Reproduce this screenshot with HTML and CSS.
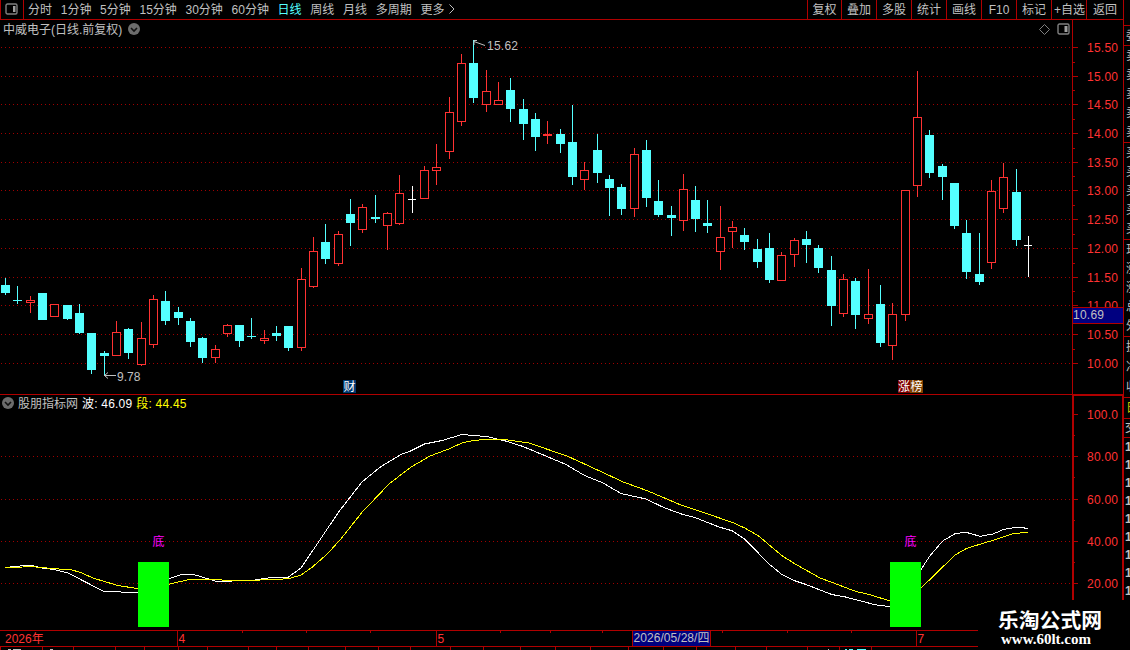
FILE: index.html
```html
<!DOCTYPE html>
<html lang="zh-CN">
<head>
    <meta charset="UTF-8">
    <title>中威电子 日线</title>
    <link rel="stylesheet" href="styles.css">
</head>
<body>
    <header class="toolbar">
        <div class="layout-btn">
            <svg width="13" height="12" viewBox="0 0 13 12"><rect x="1" y="1" width="11" height="10" rx="1.5"/><rect class="fill" x="8" y="3" width="2.5" height="6"/></svg>
        </div>
        <nav class="periods">
            <span>分时</span><span>1分钟</span><span>5分钟</span><span>15分钟</span><span>30分钟</span><span>60分钟</span><span class="active">日线</span><span>周线</span><span>月线</span><span>多周期</span><span>更多</span>
            <svg class="more" width="6" height="10" viewBox="0 0 6 10"><path d="M0.5 0.5L5 5L0.5 9.5"/></svg>
        </nav>
        <nav class="tools">
            <span>复权</span><span>叠加</span><span>多股</span><span>统计</span><span>画线</span><span>F10</span><span>标记</span><span class="tight">+自选</span><span>返回</span>
        </nav>
    </header>

    <div class="workspace">
        <main class="charts">
            <section class="panel price">
                <svg id="price" width="1123" height="374" viewBox="0 20 1123 374"></svg>
                <div class="title">
                    <span>中威电子(日线.前复权)</span>
                    <svg class="drop" width="12" height="12" viewBox="0 0 12 12"><circle cx="6" cy="6" r="6"/><path d="M3 5L6 8L9 5"/></svg>
                    <div class="panel-icons">
                        <svg width="11" height="11" viewBox="0 0 11 11"><path d="M5.5 0.5L10.5 5.5L5.5 10.5L0.5 5.5Z"/></svg>
                        <svg class="split" width="13" height="12" viewBox="0 0 13 12"><rect x="1" y="1" width="11" height="10" rx="1.5"/><rect class="fill" x="7.5" y="3" width="3" height="6"/></svg>
                    </div>
                </div>
            </section>
            <section class="panel indicator">
                <svg id="indicator" width="1123" height="236" viewBox="0 394 1123 236"></svg>
                <div class="title">
                    <svg class="drop" width="12" height="12" viewBox="0 0 12 12"><circle cx="6" cy="6" r="6"/><path d="M3 5L6 8L9 5"/></svg>
                    <span>股朋指标网</span>
                    <span class="wave">波: 46.09</span>
                    <span class="band">段: 44.45</span>
                </div>
            </section>
            <footer class="timeline">
                <svg id="timeline" width="978" height="20" viewBox="0 630 978 20"></svg>
            </footer>
        </main>
        <aside class="quote">
            <div class="group one"><span>委</span></div>
            <div class="group five"><span>卖</span><span>卖</span><span>卖</span><span>卖</span><span>卖</span></div>
            <div class="group five"><span>买</span><span>买</span><span>买</span><span>买</span><span>买</span></div>
            <div class="group five"><span>现</span><span>涨</span><span>涨</span><span>总</span><span>外</span></div>
            <div class="group three"><span>换</span><span>净</span><span>收</span></div>
            <div class="group tab"><span>日</span></div>
            <div class="group head"><span>交</span></div>
            <div class="ticks"><span>1</span><span>1</span><span>1</span><span>1</span><span>1</span><span>1</span><span>1</span><span>1</span><span>1</span></div>
        </aside>
    </div>

    <div class="watermark">
        <div class="site">乐淘公式网</div>
        <div class="url">www.60lt.com</div>
    </div>
    <script src="chart.js"></script>
</body>
</html>
```
FILE: styles.css
```css
body {
    margin: 0;
    width: 1130px;
    height: 650px;
    overflow: hidden;
    background: #000;
    color: #c0c0c0;
    font: 12px/14px "Liberation Sans", "Noto Sans CJK SC", sans-serif;
    position: relative;
}
svg {
    display: block;
    flex: none;
}
span {
    white-space: nowrap;
}

/* toolbar */
.toolbar {
    display: flex;
    box-sizing: border-box;
    width: 1124px;
    height: 20px;
    border: solid #b00000;
    border-width: 0 1px 1px;
}
.layout-btn {
    width: 18px;
    padding: 3px 0 0 4px;
    border-right: 1px solid #b00000;
}
.layout-btn svg rect,
.split rect {
    fill: none;
    stroke: #808080;
    stroke-width: 1.4;
}
.layout-btn svg .fill,
.split .fill {
    fill: #a0a0a0;
    stroke: none;
}
.periods {
    display: flex;
    gap: 8.7px;
    padding: 3px 0 0 4px;
}
.periods .active {
    color: #54ffff;
}
.more {
    margin: 1px 0 0 -4px;
}
.more path {
    fill: none;
    stroke: #c0c0c0;
}
.tools {
    display: flex;
    margin-left: auto;
}
.tools span {
    box-sizing: border-box;
    width: 35px;
    padding-top: 3px;
    border-left: 1px solid #b00000;
    text-align: center;
}
.tools span:first-child {
    width: 34px;
}
.tools span:last-child {
    width: 37px;
}
.tools .tight {
    padding-left: 1px;
}

/* panels */
.workspace {
    display: flex;
    height: 630px;
}
.charts {
    width: 1123px;
}
.panel {
    display: grid;
}
.panel > * {
    grid-area: 1 / 1;
}
.title {
    display: flex;
    align-items: center;
    align-self: start;
    height: 14px;
    padding: 2px 0 0 3px;
}
.title span {
    padding-top: 2px;
}
.drop circle {
    fill: #6c6c6c;
}
.drop path {
    fill: none;
    stroke: #111;
    stroke-width: 1.6;
}
.price .drop {
    margin-left: 6px;
}
.panel-icons {
    display: flex;
    gap: 7px;
    margin-left: auto;
    padding-right: 53px;
    align-items: center;
}
.panel-icons path {
    fill: none;
    stroke: #808080;
}
.indicator .title {
    gap: 4px;
    padding-left: 2px;
}
.indicator .wave,
.indicator .band {
    letter-spacing: 0.2px;
}
.wave {
    color: #fff;
}
.band {
    color: #ff0;
}

/* chart drawing */
.line {
    fill: none;
    stroke: #b00000;
    shape-rendering: crispEdges;
}
.thick {
    stroke-width: 2;
}
.grid {
    stroke: #a00000;
    stroke-dasharray: 1 3;
    shape-rendering: crispEdges;
}
.up {
    fill: #000;
    stroke: #ff3232;
    shape-rendering: crispEdges;
}
.down {
    fill: #54ffff;
    shape-rendering: crispEdges;
}
.flat {
    fill: #fff;
    shape-rendering: crispEdges;
}
.upwick {
    fill: #ff3232;
    shape-rendering: crispEdges;
}
.curve {
    fill: none;
    shape-rendering: crispEdges;
}
.curve.white {
    stroke: #fff;
}
.curve.yellow {
    stroke: #ff0;
}
.scale {
    fill: #ff3232;
}
.note {
    fill: #c0c0c0;
}
.arrow {
    fill: none;
    stroke: #c0c0c0;
}
.signal {
    fill: #0f0;
}
.signal-text {
    fill: #f0f;
}
.navy {
    fill: #000080;
}
.tag {
    fill: #fff;
}
.tag-cai {
    fill: #003870;
}
.tag-zhang {
    fill: #800000;
}
.tag-bang {
    fill: #804000;
}

/* quote list on the right edge */
.quote {
    box-sizing: border-box;
    width: 7px;
    height: 650px;
    margin-top: -20px;
    padding-top: 25px;
    border-left: 1px solid #b00000;
    overflow: hidden;
}
.group {
    box-sizing: border-box;
    display: flex;
    flex-direction: column;
    justify-content: space-around;
    border-top: 1px solid #b00000;
    padding-left: 2px;
}
.one {
    height: 20px;
}
.five {
    height: 97px;
}
.three {
    height: 61px;
}
.tab {
    height: 21px;
    padding-left: 2px;
    color: #c8c800;
}
.head {
    height: 19px;
    padding-left: 1px;
}
.ticks {
    display: flex;
    flex-direction: column;
    border-top: 1px solid #b00000;
    padding-left: 1px;
    font-weight: bold;
    line-height: 18px;
}

.watermark {
    position: absolute;
    right: 0;
    bottom: 0;
    box-sizing: border-box;
    width: 152px;
    height: 50px;
    padding: 7px 0 0 20px;
    background: #000;
    color: #fff;
}
.site {
    font: bold 20.8px/24px "Noto Sans CJK SC", sans-serif;
}
.url {
    padding-left: 3px;
    font: bold 15px/16px "Liberation Serif", serif;
}
```
FILE: chart.js
```js
// type, high, body top, body bottom, low
const candles = [
    ['d',278,285,293,295],['d',286,300,301,304],['u',296,300,303,313],['d',293,293,320,320],
    ['u',304,304,317,317],['d',305,305,319,320],['d',304,313,333,334],['d',333,333,370,374],
    ['d',351,353,356,375],['u',321,332,356,356],['d',328,329,353,359],['u',322,338,365,366],
    ['u',295,299,345,348],['d',291,301,321,325],['d',307,312,318,325],['d',318,321,342,347],
    ['d',337,338,358,363],['u',345,349,358,363],['u',324,325,334,337],['d',325,325,341,347],
    ['d',318,336,337,339],['u',330,338,341,344],['d',326,333,336,341],['d',326,326,348,351],
    ['u',268,279,348,351],['u',237,251,287,288],['d',224,242,259,264],['u',231,234,264,266],
    ['d',199,214,223,246],['u',204,207,230,233],['d',195,217,219,223],['u',212,213,226,250],
    ['u',175,193,224,225],['f',186,199,200,213],['u',166,170,199,199],['u',144,167,171,185],
    ['u',97,112,152,159],['u',54,63,122,126],['d',40,63,98,103],['u',70,91,105,112],
    ['u',82,100,105,105],['d',78,90,109,122],['d',99,109,124,140],['d',113,119,137,151],
    ['u',121,134,136,144],['d',129,134,144,153],['d',105,142,177,185],['u',162,170,180,190],
    ['d',134,150,173,183],['d',175,179,188,216],['d',184,187,209,215],['u',148,154,209,217],
    ['d',140,150,198,207],['d',180,201,215,217],['d',206,215,218,236],['u',174,189,221,231],
    ['d',186,200,219,232],['d',200,223,226,233],['u',206,237,252,270],['u',221,227,232,248],
    ['d',228,235,242,250],['d',239,249,262,268],['d',233,248,280,283],['u',252,255,281,281],
    ['u',238,240,255,267],['d',231,239,245,263],['d',245,248,268,273],['d',256,270,306,326],
    ['u',274,279,314,317],['d',278,281,315,329],['u',269,314,319,324],['d',285,304,343,347],
    ['u',303,314,346,360],['u',190,190,315,321],['u',71,117,186,197],['d',130,135,173,178],
    ['d',164,166,177,200],['d',183,183,226,229],['d',220,233,272,279],['d',233,274,282,285],
    ['u',180,191,263,269],['u',163,177,209,213],['d',169,192,240,246],['f',236,245,246,277]
];

const wave = '5,567.5 25,565.5 33,565.7 42,568 55,569.7 68,573 103,591 118,591.5 128,593 138,592 169,578.7 180,575 193,574.3 203,577.3 215,581 232,581 255,580 270,577.7 288,577.3 301,568 339,511.5 362,482 381,466.5 401,454.5 410.6,451 424.5,444 442,440.5 462,434.5 488,436.7 505.5,441 523,446.5 547,456.5 565,464 584.6,475.5 602.4,482.7 621,493.5 646,499 663.7,507.5 681.5,514 695,517.5 719,527 732,530.7 744.7,539 768.5,563.5 782,574.7 794,580.5 806,584.5 831.7,594.5 845.5,597 875,604.7 890,606.7 921,569.5 930,555.7 942.7,541 955,533.7 966,532.3 980,536.3 993,534 1004,529.3 1016.7,527.3 1027.7,528.3';
const band = '5,567.5 23,567 30,566.3 38,567.3 72,570 80,572.3 93,578 117,585.3 138,588.7 169,584.3 188,579.7 220,579.7 224,580.3 253,580.3 283,579 290,578.3 301,575 312,567.3 327.6,553.7 341.4,538.3 362,512.3 389,484 410.6,467.3 430,456 448,449.3 462,443 472,440.7 486,439.3 503.5,439.3 529,443 567,456 584.6,464 624,482.3 648,491 681.5,505.3 703,512.3 733,522.7 744.7,528 758.6,536 782,555.7 794,563.3 820,578 833.7,583 855.4,591.3 871,595 890,601 921,587.7 928,581.3 955,555 966.7,548.3 993,540.3 1013,533.7 1027.7,532.3';

const hline = (x1, x2, y, cls = 'line') => `<path class="${cls}" d="M${x1} ${y + 0.5}H${x2}"/>`;
const vline = (x, y1, y2, cls = 'line') => `<path class="${cls}" d="M${x + 0.5} ${y1}V${y2}"/>`;
const rect = (x, y, w, h, cls) => `<rect class="${cls}" x="${x}" y="${y}" width="${w}" height="${h}"/>`;
const text = (x, y, s, cls, extra = '') => `<text class="${cls}" x="${x}" y="${y}" ${extra}>${s}</text>`;

function drawCandle([type, high, top, bottom, low], i) {
    const x = Math.round(5 + i * 12.3245);
    if (type === 'u') {
        return rect(x, high, 1, top - high, 'upwick') + rect(x, bottom, 1, low - bottom, 'upwick') +
            `<rect class="up" x="${x - 3.5}" y="${top + 0.5}" width="8" height="${bottom - top - 1}"/>`;
    }
    const cls = type === 'd' ? 'down' : 'flat';
    return rect(x, high, 1, low - high, cls) + rect(x - 4, top, type === 'd' ? 9 : 8, bottom - top, cls);
}

function drawPrice() {
    const ys = [47, 76, 104, 133, 162, 190, 219, 248, 277, 305, 334, 363];
    let out = '';
    ys.forEach((y, i) => {
        out += hline(1, 1072, y, 'grid') + hline(1073, 1078, y);
        out += text(1087, y + 5, (15.5 - i * 0.5).toFixed(2), 'scale', 'textLength="31"');
        if (i < 11 && i !== 9) out += hline(1073, 1075, Math.round((y + ys[i + 1]) / 2));
    });
    out += candles.map(drawCandle).join('');
    out += vline(1072, 20, 394);
    out += rect(1073, 307, 50, 17, 'navy') + hline(1073, 1123, 307) + hline(1073, 1123, 323);
    out += text(1073, 319, '10.69', 'note', 'textLength="31"');
    out += '<path class="arrow" d="M474 41.5L485 45.5M474 45V40.5H477"/>' + text(487, 50, '15.62', 'note', 'textLength="31"');
    out += '<path class="arrow" d="M104 375.5H116M108 372.5L104.5 375.5L108 378.5"/>' + text(117, 381, '9.78', 'note');
    out += rect(343, 380, 13, 13, 'tag-cai') + text(343.5, 391, '财', 'tag');
    out += rect(898, 380, 12, 13, 'tag-zhang') + text(898, 391, '涨', 'tag');
    out += rect(910, 380, 13, 13, 'tag-bang') + text(910.5, 391, '榜', 'tag');
    document.getElementById('price').innerHTML = out;
}

function drawIndicator() {
    let out = '';
    [['100.0', 414], ['80.00', 456], ['60.00', 499], ['40.00', 541], ['20.00', 583]].forEach(([label, y], i) => {
        if (i) out += hline(1, 1072, y, 'grid');
        out += hline(1074, 1078, y) + text(1087, y + 5, label, 'scale', 'textLength="31"');
        if (i < 4) out += hline(1074, 1075, y + 21);
    });
    out += `<polyline class="curve white" points="${wave}"/><polyline class="curve yellow" points="${band}"/>`;
    out += rect(138, 562, 31, 65, 'signal') + rect(890, 562, 31, 65, 'signal');
    out += text(152.5, 546, '底', 'signal-text') + text(904.5, 546, '底', 'signal-text');
    out += hline(0, 1123, 394);
    out += '<path class="line thick" d="M1073 630V395H1123M1123 395V630"/>';
    document.getElementById('indicator').innerHTML = out;
}

function drawTimeline() {
    let out = hline(0, 978, 630) + hline(0, 978, 646);
    [177, 436, 916].forEach(x => out += vline(x, 630, 646));
    [242, 306, 370, 500, 550, 602, 722, 787, 851].forEach(x => out += vline(x, 631, 633));
    [0, 42, 73, 115, 144, 178, 207, 248, 276, 308, 345, 378, 410, 450, 483, 520, 555, 590, 628, 663, 696, 735, 766, 807, 839, 871]
        .forEach(x => out += vline(x, 647, 650));
    out += text(5, 643, '2026年', 'scale') + text(178.5, 643, '4', 'scale') + text(437.5, 643, '5', 'scale') + text(917.5, 643, '7', 'scale');
    out += rect(633, 631, 77, 15, 'navy') + vline(632, 631, 646) + vline(710, 631, 646);
    out += text(633.5, 642, '2026/05/28/四', 'note', 'textLength="76"');
    // top edge of the next row of quotes
    out += rect(8, 649, 3, 1, 'note') + rect(13, 649, 8, 1, 'note') + rect(50, 649, 3, 1, 'note') + rect(828, 649, 1, 1, 'note') +
        rect(845, 649, 2, 1, 'down') + rect(849, 649, 4, 1, 'down') + rect(857, 649, 9, 1, 'down');
    document.getElementById('timeline').innerHTML = out;
}

drawPrice();
drawIndicator();
drawTimeline();
```
